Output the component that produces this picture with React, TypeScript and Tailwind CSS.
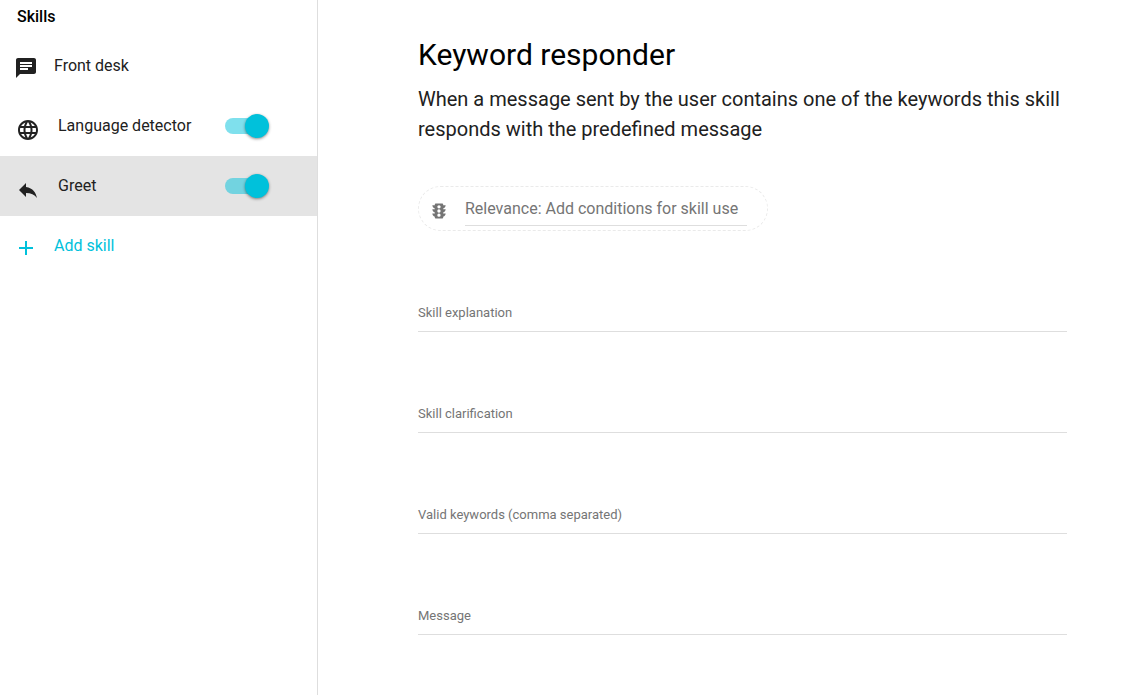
import { useState } from "react";
import type { ReactNode } from "react";
import { MdAdd, MdChat, MdLanguage, MdReply, MdTraffic } from "react-icons/md";

function Toggle({ label }: { label: string }) {
  const [on, setOn] = useState(true);
  return (
    <label className="relative flex h-6 w-11 cursor-pointer items-center">
      <input
        type="checkbox"
        role="switch"
        aria-label={label}
        checked={on}
        onChange={() => setOn(!on)}
        className="peer absolute inset-0 m-0 cursor-pointer appearance-none"
      />
      <span className="pointer-events-none h-4 w-9 rounded-full bg-gray-400/50 peer-checked:bg-[#00c1db]/50" />
      <span className="pointer-events-none absolute left-0 size-6 rounded-full bg-white shadow-[0_1px_3px_rgba(0,0,0,0.45)] peer-checked:left-5 peer-checked:bg-[#00c1db]" />
    </label>
  );
}

function SkillRow({ icon, name, active = false }: { icon: ReactNode; name: string; active?: boolean }) {
  return (
    <li className={active ? "flex h-15 items-center bg-[#e4e4e4] pr-12 pl-4" : "flex h-15 items-center pr-12 pl-4"}>
      <a href="#skill" className="flex grow items-center gap-[18px]">
        <span className="pt-2">{icon}</span>
        <span>{name}</span>
      </a>
      <Toggle label={name} />
    </li>
  );
}

function Field({ id, label }: { id: string; label: string }) {
  return (
    <div className="grid">
      <input
        id={id}
        type="text"
        placeholder=" "
        className="peer col-start-1 row-start-1 h-[38px] w-full border-b border-[#dedede] bg-transparent text-base outline-none focus:border-[#00c1db]"
      />
      <label
        htmlFor={id}
        className="pointer-events-none col-start-1 row-start-1 self-center text-[13px] leading-5 text-[#757575] peer-focus:-translate-y-6 peer-[:not(:placeholder-shown)]:-translate-y-6"
      >
        {label}
      </label>
    </div>
  );
}

const fields = [
  { id: "explanation", label: "Skill explanation" },
  { id: "clarification", label: "Skill clarification" },
  { id: "keywords", label: "Valid keywords (comma separated)" },
  { id: "message", label: "Message" },
];

export default function App() {
  return (
    <div className="flex min-h-screen bg-white font-['Roboto',sans-serif] text-base text-[#212121]">
      <aside className="w-[318px] shrink-0 border-r border-[#dedede]">
        <h2 className="px-[17px] pt-[5px] pb-[7px] font-medium text-black">Skills</h2>
        <nav>
          <ul>
            <li className="flex h-15 items-center px-[14px]">
              <a href="#front-desk" className="flex items-center gap-4">
                <span className="pt-1">
                  <MdChat className="size-6" />
                </span>
                <span>Front desk</span>
              </a>
            </li>
            <SkillRow icon={<MdLanguage className="size-6" />} name="Language detector" />
            <SkillRow icon={<MdReply className="size-6" />} name="Greet" active />
            <li className="flex h-15 items-center px-[14px]">
              <button type="button" className="flex items-center gap-4 text-[#00c1db]">
                <span className="pt-1">
                  <MdAdd className="size-6" />
                </span>
                <span>Add skill</span>
              </button>
            </li>
          </ul>
        </nav>
      </aside>
      <main className="min-w-0 grow pt-[37px] pr-16 pb-15 pl-[100px]">
        <h1 className="text-[30px] leading-9 text-black">Keyword responder</h1>
        <p className="mt-[11px] text-xl leading-[30px]">
          When a message sent by the user contains one of the keywords this skill responds with the predefined message
        </p>
        <div className="mt-[42px] flex h-[45px] w-[350px] max-w-full items-start rounded-full border border-dashed border-[#eaeaea] pr-5 pl-[10px]">
          <MdTraffic className="mt-[14px] mr-4 size-5 shrink-0 text-[#757575]" />
          <input
            type="text"
            aria-label="Relevance"
            placeholder="Relevance: Add conditions for skill use"
            className="mt-1 h-[35px] min-w-0 grow border-b border-[#dedede] bg-transparent outline-none placeholder:text-[#757575]"
          />
        </div>
        <form className="mt-[63px] flex flex-col gap-[63px]">
          {fields.map((f) => (
            <Field key={f.id} id={f.id} label={f.label} />
          ))}
        </form>
      </main>
    </div>
  );
}
